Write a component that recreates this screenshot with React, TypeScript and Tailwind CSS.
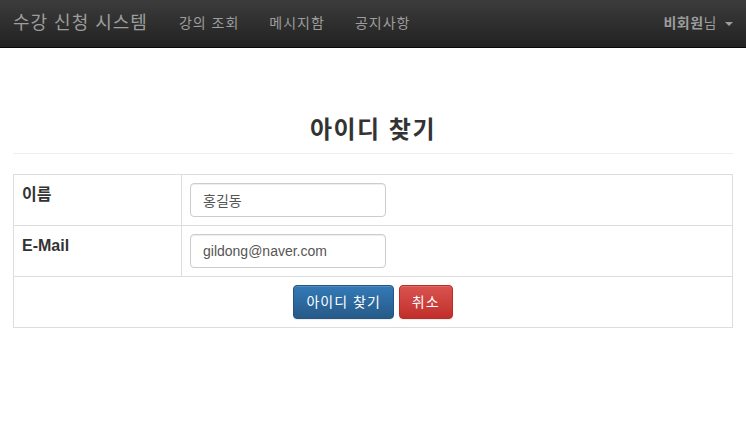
import React from "react"

const ko = { fontFamily: '"Liberation Sans", "Noto Sans CJK KR", sans-serif' }

function Navbar() {
  return (
    <nav className="h-[48px] flex items-center justify-between bg-gradient-to-b from-[#3c3c3c] to-[#222222] border-b border-[#080808] text-[#9d9d9d]">
      <div className="flex items-center h-full tracking-[1px]">
        <span className="pl-[13px] pr-[16px] text-[18px]">수강 신청 시스템</span>
        <a className="px-[15px] text-[14px]">강의 조회</a>
        <a className="px-[15px] text-[14px]">메시지함</a>
        <a className="px-[15px] text-[14px]">공지사항</a>
      </div>
      <div className="flex items-center pr-[13px] text-[14px] tracking-[0.5px]">
        <span>
          <b>비회원</b>님
        </span>
        <span className="ml-[8px] w-0 h-0 border-l-[4px] border-r-[4px] border-t-[4px] border-l-transparent border-r-transparent border-t-[#9d9d9d]" />
      </div>
    </nav>
  )
}

function Field({ label, value }: { label: string; value: string }) {
  return (
    <tr>
      <th className="w-[168px] border border-[#dddddd] p-[8px] text-left align-top text-[16px] font-bold">
        {label}
      </th>
      <td className="border border-[#dddddd] p-[8px]">
        <input
          readOnly
          value={value}
          className="w-[196px] h-[34px] px-[12px] border border-[#cccccc] rounded-[4px] text-[14px] text-[#555555] shadow-[inset_0_1px_1px_rgba(0,0,0,0.075)] outline-none"
          style={ko}
        />
      </td>
    </tr>
  )
}

export default function App() {
  return (
    <div className="min-h-[429px] bg-white text-[#333333]" style={ko}>
      <Navbar />
      <div className="px-[13px]">
        <h2 className="mt-[66px] text-center text-[24px] font-bold leading-[32px] tracking-[1.5px]">아이디 찾기</h2>
        <hr className="mt-[7px] border-0 border-t border-[#eeeeee]" />
        <table className="mt-[20px] w-full border-collapse border border-[#dddddd]">
          <tbody>
            <Field label="이름" value="홍길동" />
            <Field label="E-Mail" value="gildong@naver.com" />
            <tr>
              <td colSpan={2} className="border border-[#dddddd] p-[8px]">
                <div className="flex justify-center gap-[5px]">
                  <button className="h-[34px] px-[12px] rounded-[4px] border border-[#245580] bg-gradient-to-b from-[#337ab7] to-[#265a88] text-white text-[14px] tracking-[1px] shadow-[inset_0_1px_0_rgba(255,255,255,0.15),0_1px_1px_rgba(0,0,0,0.075)]">
                    아이디 찾기
                  </button>
                  <button className="h-[34px] px-[12px] rounded-[4px] border border-[#b92c28] bg-gradient-to-b from-[#d9534f] to-[#c12e2a] text-white text-[14px] tracking-[1px] shadow-[inset_0_1px_0_rgba(255,255,255,0.15),0_1px_1px_rgba(0,0,0,0.075)]">
                    취소
                  </button>
                </div>
              </td>
            </tr>
          </tbody>
        </table>
      </div>
    </div>
  )
}
